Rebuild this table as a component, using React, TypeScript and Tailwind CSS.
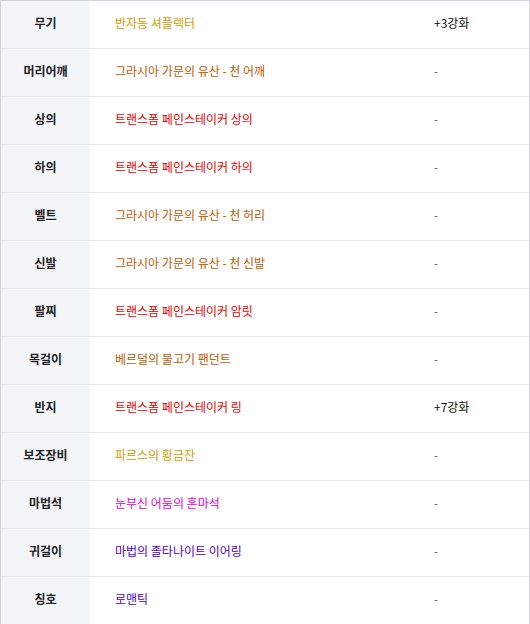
import React from "react";

const rows: { label: string; name: string; color: string; extra: string }[] = [
  { label: "무기", name: "반자동 셔플렉터", color: "text-[#d49a00]", extra: "+3강화" },
  { label: "머리어깨", name: "그라시아 가문의 유산 - 천 어깨", color: "text-[#bb5a00]", extra: "-" },
  { label: "상의", name: "트랜스폼 페인스테이커 상의", color: "text-[#e80000]", extra: "-" },
  { label: "하의", name: "트랜스폼 페인스테이커 하의", color: "text-[#e80000]", extra: "-" },
  { label: "벨트", name: "그라시아 가문의 유산 - 천 허리", color: "text-[#bb5a00]", extra: "-" },
  { label: "신발", name: "그라시아 가문의 유산 - 천 신발", color: "text-[#bb5a00]", extra: "-" },
  { label: "팔찌", name: "트랜스폼 페인스테이커 암릿", color: "text-[#e80000]", extra: "-" },
  { label: "목걸이", name: "베르덜의 물고기 팬던트", color: "text-[#bb5a00]", extra: "-" },
  { label: "반지", name: "트랜스폼 페인스테이커 링", color: "text-[#e80000]", extra: "+7강화" },
  { label: "보조장비", name: "파르스의 황금잔", color: "text-[#d49a00]", extra: "-" },
  { label: "마법석", name: "눈부신 어둠의 혼마석", color: "text-[#e000e0]", extra: "-" },
  { label: "귀걸이", name: "마법의 졸타나이트 이어링", color: "text-[#5000c8]", extra: "-" },
  { label: "칭호", name: "로맨틱", color: "text-[#5000c8]", extra: "-" },
];

export default function App() {
  return (
    <div
      className="w-[530px] h-[624px] overflow-hidden bg-white"
      style={{ fontFamily: '"Noto Sans CJK KR", "Noto Sans", sans-serif' }}
    >
      <div className="border-t border-l border-r border-[#d0d3dc]">
        {rows.map((r) => (
          <div key={r.label} className="flex h-[48px] border-b border-[#e6e7ec]">
            <div className="w-[89px] shrink-0 bg-[#f4f5f9] flex items-center justify-center text-[12px] font-bold text-[#222] pb-[3px]">
              {r.label}
            </div>
            <div className={`flex-1 flex items-center pl-[25px] text-[12px] pb-[3px] ${r.color}`}>
              {r.name}
            </div>
            <div
              className={`w-[95px] shrink-0 flex items-center text-[12px] pb-[3px] ${
                r.extra === "-" ? "text-[#666]" : "text-[#111]"
              }`}
            >
              {r.extra}
            </div>
          </div>
        ))}
      </div>
    </div>
  );
}
